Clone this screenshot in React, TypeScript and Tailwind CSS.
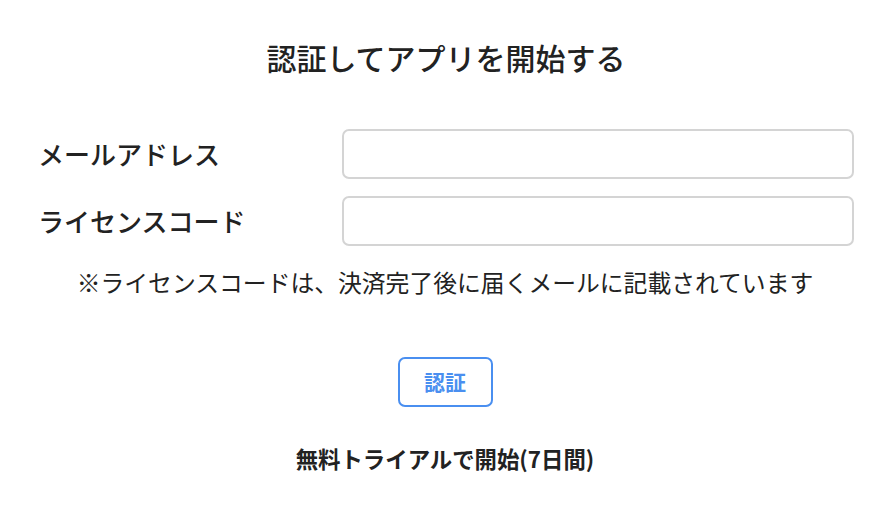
export default function App() {
  return (
    <div className="min-h-[514px] w-full bg-white text-[#222] [font-family:'Noto_Sans_CJK_JP','Noto_Sans',sans-serif]">
      <div className="flex flex-col items-stretch pt-[36px] pl-[38px] pr-[36px]">
        {/* Title */}
        <h1 className="text-center text-[30px] leading-[42px] font-medium">
          認証してアプリを開始する
        </h1>

        {/* Form */}
        <div className="mt-[51px] flex flex-col gap-[17px]">
          <div className="flex items-center">
            <label className="w-[304px] shrink-0 text-[26px] leading-[34px] font-medium">
              メールアドレス
            </label>
            <input
              type="email"
              className="h-[50px] flex-1 rounded-[7px] border-2 border-[#d4d4d4] bg-white px-3 text-[18px] outline-none"
            />
          </div>
          <div className="flex items-center">
            <label className="w-[304px] shrink-0 text-[26px] leading-[34px] font-medium">
              ライセンスコード
            </label>
            <input
              type="text"
              className="h-[50px] flex-1 rounded-[7px] border-2 border-[#d4d4d4] bg-white px-3 text-[18px] outline-none"
            />
          </div>
        </div>

        {/* Note */}
        <p className="-ml-[38px] -mr-[36px] mt-[20px] text-center text-[23.8px] leading-[32px]">
          ※ライセンスコードは、決済完了後に届くメールに記載されています
        </p>

        {/* Submit */}
        <div className="-ml-[38px] -mr-[36px] mt-[59px] flex justify-center">
          <button className="h-[50px] w-[95px] rounded-[7px] border-2 border-[#4a8ff0] bg-white text-[21px] font-bold text-[#4a8ff0]">
            認証
          </button>
        </div>

        {/* Trial */}
        <div className="-ml-[38px] -mr-[36px] mt-[36px] text-center text-[22.4px] leading-[30px] font-bold">
          無料トライアルで開始(7日間)
        </div>
      </div>
    </div>
  );
}
